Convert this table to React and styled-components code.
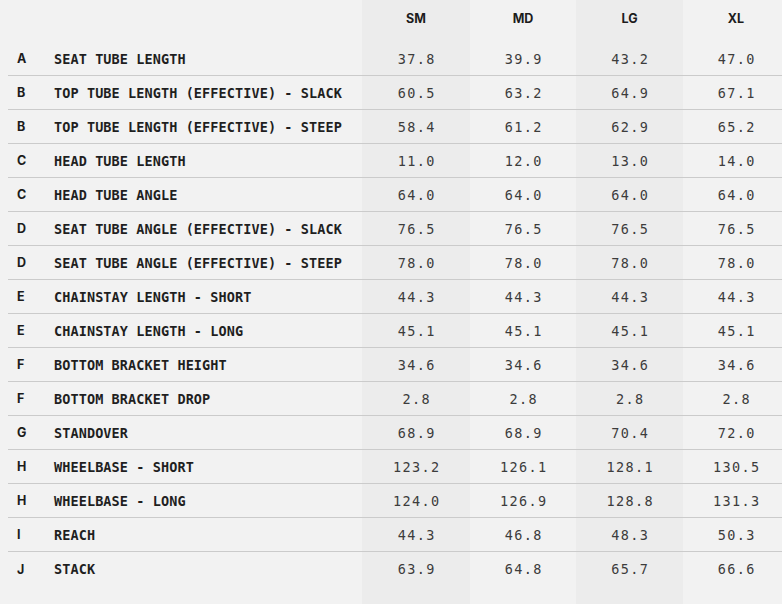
import styled, { createGlobalStyle } from "styled-components";

const GlobalStyle = createGlobalStyle`
    html, body{
        margin: 0;
        padding: 0;
        background: #f2f2f2;
        overflow: hidden;
    }
`;

const SIZES = ["SM", "MD", "LG", "XL"];

const ROWS = [
    ["A", "SEAT TUBE LENGTH", ["37.8", "39.9", "43.2", "47.0"]],
    ["B", "TOP TUBE LENGTH (EFFECTIVE) - SLACK", ["60.5", "63.2", "64.9", "67.1"]],
    ["B", "TOP TUBE LENGTH (EFFECTIVE) - STEEP", ["58.4", "61.2", "62.9", "65.2"]],
    ["C", "HEAD TUBE LENGTH", ["11.0", "12.0", "13.0", "14.0"]],
    ["C", "HEAD TUBE ANGLE", ["64.0", "64.0", "64.0", "64.0"]],
    ["D", "SEAT TUBE ANGLE (EFFECTIVE) - SLACK", ["76.5", "76.5", "76.5", "76.5"]],
    ["D", "SEAT TUBE ANGLE (EFFECTIVE) - STEEP", ["78.0", "78.0", "78.0", "78.0"]],
    ["E", "CHAINSTAY LENGTH - SHORT", ["44.3", "44.3", "44.3", "44.3"]],
    ["E", "CHAINSTAY LENGTH - LONG", ["45.1", "45.1", "45.1", "45.1"]],
    ["F", "BOTTOM BRACKET HEIGHT", ["34.6", "34.6", "34.6", "34.6"]],
    ["F", "BOTTOM BRACKET DROP", ["2.8", "2.8", "2.8", "2.8"]],
    ["G", "STANDOVER", ["68.9", "68.9", "70.4", "72.0"]],
    ["H", "WHEELBASE - SHORT", ["123.2", "126.1", "128.1", "130.5"]],
    ["H", "WHEELBASE - LONG", ["124.0", "126.9", "128.8", "131.3"]],
    ["I", "REACH", ["44.3", "46.8", "48.3", "50.3"]],
    ["J", "STACK", ["63.9", "64.8", "65.7", "66.6"]],
];

const Table = styled.div`
    width: 789px;
    padding-left: 8px;
`;

const Row = styled.div`
    display: grid;
    grid-template-columns: 46px 308px 108px 106px 107px 106px;
    height: ${props => props.$height}px;
    box-sizing: border-box;
    border-bottom: ${props => props.$line ? "1px solid #cbcbcb" : "none"};
`;

const Cell = styled.div`
    display: flex;
    align-items: ${props => props.$top ? "flex-start" : "center"};
    justify-content: ${props => props.$center ? "center" : "flex-start"};
    background: ${props => props.$shade ? "#ececec" : "transparent"};
    padding-top: ${props => props.$top ? "11px" : "0"};
    box-sizing: border-box;
`;

const HeadText = styled.span`
    font-family: Inter, "Liberation Sans", sans-serif;
    font-weight: 700;
    font-size: 12.5px;
    line-height: 15px;
    color: #1c1c1c;
`;

const Letter = styled.span`
    font-family: Inter, "Liberation Sans", sans-serif;
    font-weight: 700;
    font-size: 12.5px;
    color: #1c1c1c;
    padding-left: 9px;
`;

const Label = styled.span`
    font-family: "DejaVu Sans Mono", "Liberation Mono", monospace;
    font-weight: 700;
    font-size: 13.5px;
    letter-spacing: 0.1px;
    color: #1f1f1f;
    white-space: nowrap;
`;

const Value = styled.span`
    font-family: "DejaVu Sans Mono", "Liberation Mono", monospace;
    font-size: 13.5px;
    letter-spacing: 1.4px;
    color: #3c3c3c;
    margin-right: -1.4px;
`;

const App = () => {
    return (
        <>
            <GlobalStyle/>
            <Table>
                <Row $height={42}>
                    <Cell/>
                    <Cell/>
                    {SIZES.map((s, i) => (
                        <Cell key={s} $center $top $shade={i % 2 === 0}>
                            <HeadText>{s}</HeadText>
                        </Cell>
                    ))}
                </Row>

                {ROWS.map(([letter, label, values], r) => (
                    <Row key={label} $height={34} $line={r < ROWS.length - 1}>
                        <Cell><Letter>{letter}</Letter></Cell>
                        <Cell><Label>{label}</Label></Cell>
                        {values.map((v, i) => (
                            <Cell key={i} $center $shade={i % 2 === 0}>
                                <Value>{v}</Value>
                            </Cell>
                        ))}
                    </Row>
                ))}

                <Row $height={40}>
                    <Cell/>
                    <Cell/>
                    {SIZES.map((s, i) => (
                        <Cell key={s} $shade={i % 2 === 0}/>
                    ))}
                </Row>
            </Table>
        </>
    )
}

export default App;
